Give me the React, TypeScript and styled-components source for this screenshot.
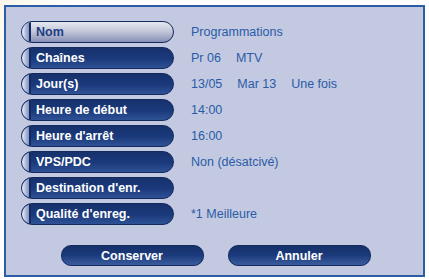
import React from "react";
import styled, { createGlobalStyle } from "styled-components";

const GlobalStyle = createGlobalStyle`
  html, body {
    margin: 0;
    padding: 0;
    background: #ffffff;
  }
  body {
    font-family: "Liberation Sans", Arial, sans-serif;
  }
`;

const Screen = styled.div`
  width: 429px;
  height: 279px;
  padding: 5px 4px 2px 4px;
  box-sizing: border-box;
  background: linear-gradient(135deg, #fbf6e8 0%, #ffffff 12%);
`;

const Panel = styled.div`
  height: 272px;
  box-sizing: border-box;
  border: 2px solid #2d5ca6;
  background: #c2c9e1;
  padding: 14px 0 9px 15px;
  display: flex;
  flex-direction: column;
`;

const Grid = styled.div`
  display: grid;
  grid-template-columns: 153px auto;
  grid-auto-rows: 22px;
  column-gap: 17px;
  row-gap: 4px;
`;

const FieldButton = styled.div<{ $active?: boolean }>`
  display: flex;
  align-items: stretch;
  box-sizing: border-box;
  height: 22px;
  border: 1px solid #14295c;
  border-radius: 11px;
  overflow: hidden;
  background: ${(p) =>
    p.$active
      ? "linear-gradient(to bottom, #e6e8f0 0%, #c4c8da 45%, #8690b6 100%)"
      : "linear-gradient(to bottom, #16316c 0%, #1b3a7c 55%, #2f5296 100%)"};
`;

const Cap = styled.span`
  width: 7px;
  flex: none;
  background: linear-gradient(to right, #eef1f8 0%, #a8b6d8 60%, #7f93c4 100%);
  border-right: 2px solid #14295c;
`;

const Label = styled.span<{ $active?: boolean }>`
  display: flex;
  align-items: center;
  padding-left: 5px;
  font-size: 12.5px;
  font-weight: bold;
  color: ${(p) => (p.$active ? "#1e3c82" : "#ffffff")};
  white-space: nowrap;
`;

const Value = styled.div`
  display: flex;
  align-items: center;
  gap: 15px;
  font-size: 12.5px;
  color: #2b5ba6;
  white-space: nowrap;
`;

const Footer = styled.div`
  margin-top: auto;
  display: flex;
  justify-content: center;
  gap: 24px;
  padding-right: 13px;
`;

const ActionButton = styled.div`
  width: 143px;
  height: 21px;
  box-sizing: border-box;
  border: 1px solid #14295c;
  border-radius: 10px;
  background: linear-gradient(to bottom, #15306a 0%, #1c3b7c 50%, #3a5c9e 100%);
  color: #ffffff;
  font-size: 12.5px;
  font-weight: bold;
  display: flex;
  align-items: center;
  justify-content: center;
`;

const rows: { label: string; values: string[] }[] = [
  { label: "Nom", values: ["Programmations"] },
  { label: "Chaînes", values: ["Pr 06", "MTV"] },
  { label: "Jour(s)", values: ["13/05", "Mar 13", "Une fois"] },
  { label: "Heure de début", values: ["14:00"] },
  { label: "Heure d'arrêt", values: ["16:00"] },
  { label: "VPS/PDC", values: ["Non (désatcivé)"] },
  { label: "Destination d'enr.", values: [] },
  { label: "Qualité d'enreg.", values: ["*1 Meilleure"] },
];

export default function App() {
  return (
    <>
      <GlobalStyle />
      <Screen>
        <Panel>
          <Grid>
            {rows.map((row, i) => (
              <React.Fragment key={row.label}>
                <FieldButton $active={i === 0}>
                  <Cap />
                  <Label $active={i === 0}>{row.label}</Label>
                </FieldButton>
                <Value>
                  {row.values.map((v) => (
                    <span key={v}>{v}</span>
                  ))}
                </Value>
              </React.Fragment>
            ))}
          </Grid>
          <Footer>
            <ActionButton>Conserver</ActionButton>
            <ActionButton>Annuler</ActionButton>
          </Footer>
        </Panel>
      </Screen>
    </>
  );
}
